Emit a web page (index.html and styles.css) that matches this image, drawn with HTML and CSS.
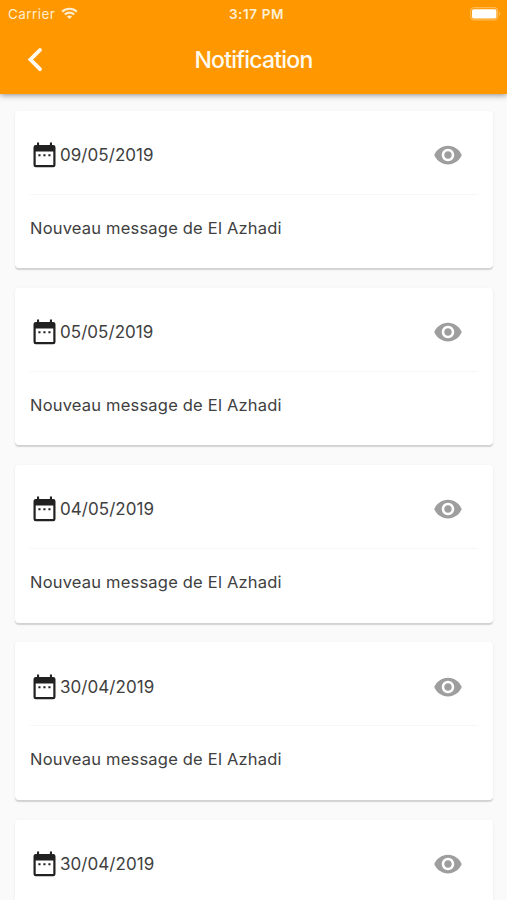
FILE: index.html
```html
<!DOCTYPE html>
<html lang="fr">
<head>
<meta charset="utf-8">
<title>Notification</title>
<link rel="stylesheet" href="styles.css">
</head>
<body>
<svg class="symbols" aria-hidden="true">
  <symbol id="calendar" viewBox="0 0 23 26">
    <path fill-rule="evenodd" d="M4 .5h2.1v2.4h10.8V.5H19v2.4h1.2a2.3 2.3 0 0 1 2.3 2.3v17.7a2.3 2.3 0 0 1-2.3 2.3H2.8A2.3 2.3 0 0 1 .5 22.9V5.2a2.3 2.3 0 0 1 2.3-2.3H4zM2.7 9.5v13.4h17.6V9.5z"/>
    <path d="M5.4 12.2h2.1v2H5.4zM10.4 12.2h2.1v2h-2.1zM15.4 12.2h2.1v2h-2.1z"/>
  </symbol>
  <symbol id="eye" viewBox="0 0 24 24">
    <path d="M12 4.5C7 4.5 2.73 7.61 1 12c1.73 4.39 6 7.5 11 7.5s9.27-3.11 11-7.5c-1.73-4.39-6-7.5-11-7.5zM12 17c-2.76 0-5-2.24-5-5s2.24-5 5-5 5 2.24 5 5-2.24 5-5 5zm0-8c-1.66 0-3 1.34-3 3s1.34 3 3 3 3-1.34 3-3-1.34-3-3-3z"/>
  </symbol>
</svg>
<header class="app-bar">
  <div class="status">
    <div class="carrier">
      <span>Carrier</span>
      <svg class="wifi" viewBox="0 0 18 13"><path d="M1.2 4.7a11.2 11.2 0 0 1 15.6 0M4 7.6a7.2 7.2 0 0 1 10 0" fill="none" stroke="currentColor" stroke-width="2.2"/><path d="M9 12.4 6.2 9.8a4.2 4.2 0 0 1 5.6 0z" fill="currentColor"/></svg>
    </div>
    <span class="time">3:17 PM</span>
    <svg class="battery" viewBox="0 0 32 14"><rect x=".7" y=".7" width="27" height="12.2" rx="3" fill="none" stroke="#fff" stroke-opacity=".4" stroke-width="1"/><rect x="2" y="2.2" width="24.4" height="9.2" rx="1.6" fill="#fff"/><path d="M29.2 4.8q2 2 0 4z" fill="#fff" opacity=".5"/></svg>
  </div>
  <div class="toolbar">
    <svg class="back" viewBox="0 0 16 26"><path d="M13 3 3.4 12.6 13 22.2" fill="none" stroke="currentColor" stroke-width="3.8" stroke-linecap="round"/></svg>
    <h1 class="title">Notification</h1>
  </div>
</header>
<main class="list">
  <article class="card">
    <div class="card-head"><svg class="calendar"><use href="#calendar"/></svg><span class="date">09/05/2019</span><svg class="eye"><use href="#eye"/></svg></div>
    <p class="message">Nouveau message de El Azhadi</p>
  </article>
  <article class="card">
    <div class="card-head"><svg class="calendar"><use href="#calendar"/></svg><span class="date">05/05/2019</span><svg class="eye"><use href="#eye"/></svg></div>
    <p class="message">Nouveau message de El Azhadi</p>
  </article>
  <article class="card">
    <div class="card-head"><svg class="calendar"><use href="#calendar"/></svg><span class="date">04/05/2019</span><svg class="eye"><use href="#eye"/></svg></div>
    <p class="message">Nouveau message de El Azhadi</p>
  </article>
  <article class="card">
    <div class="card-head"><svg class="calendar"><use href="#calendar"/></svg><span class="date">30/04/2019</span><svg class="eye"><use href="#eye"/></svg></div>
    <p class="message">Nouveau message de El Azhadi</p>
  </article>
  <article class="card card-last">
    <div class="card-head"><svg class="calendar"><use href="#calendar"/></svg><span class="date">30/04/2019</span><svg class="eye"><use href="#eye"/></svg></div>
  </article>
</main>
</body>
</html>
```
FILE: styles.css
```css
* { box-sizing: border-box; }
body {
  margin: 0;
  height: 900px;
  display: flex;
  flex-direction: column;
  overflow: hidden;
  background: #fafafa;
  color: #404040;
  font-family: Inter, "Liberation Sans", sans-serif;
}
.symbols { display: none; }
.app-bar {
  flex: none;
  position: relative;
  z-index: 1;
  height: 94px;
  background: #ff9800;
  color: #fffaf0;
  box-shadow: 0 1px 6px rgba(0, 0, 0, .45);
}
.status {
  display: grid;
  grid-template-columns: 1fr auto 1fr;
  align-items: center;
  height: 27px;
  padding: 0 5px 0 8px;
  font-size: 13.5px;
}
.carrier { display: flex; align-items: center; gap: 6px; letter-spacing: .45px; color: #ffedcd; }
.wifi { width: 17px; height: 13px; }
.time { padding-left: 3px; font-size: 13.5px; font-weight: 600; letter-spacing: .6px; color: #fff0d5; }
.battery { width: 32px; height: 14px; justify-self: end; }
.toolbar {
  display: grid;
  grid-template-columns: 1fr auto 1fr;
  align-items: center;
  height: 66px;
  padding: 0 27px;
}
.back { width: 16px; height: 26px; }
.title { margin: 0; font-size: 23px; font-weight: 500; letter-spacing: -.78px; }
.list {
  flex: 1;
  min-height: 0;
  overflow: hidden;
  display: flex;
  flex-direction: column;
  gap: 19.75px;
  padding: 16.5px 14.5px 0 15px;
}
.card {
  flex: none;
  height: 157.5px;
  padding: 0 15px;
  border-radius: 4px;
  background: #fff;
  box-shadow: 0 1.5px 1px rgba(0, 0, 0, .14), 0 1px 4px rgba(0, 0, 0, .04);
}
.card-last { height: 80.5px; border-radius: 4px 4px 0 0; }
.card-head {
  display: flex;
  align-items: center;
  height: 84px;
  padding: 5.5px 14.5px 0 3px;
  border-bottom: 1px solid #f7f7f7;
}
.card-last .card-head { height: 80.5px; padding-top: 8px; border-bottom: 0; }
.calendar { width: 23px; height: 26px; fill: #212121; }
.date { margin-left: 4px; font-size: 17px; letter-spacing: .05px; }
.eye { width: 30px; height: 30px; margin-left: auto; fill: #9e9e9e; }
.message { margin: 0; line-height: 67px; font-size: 16.5px; letter-spacing: .2px; }
```
